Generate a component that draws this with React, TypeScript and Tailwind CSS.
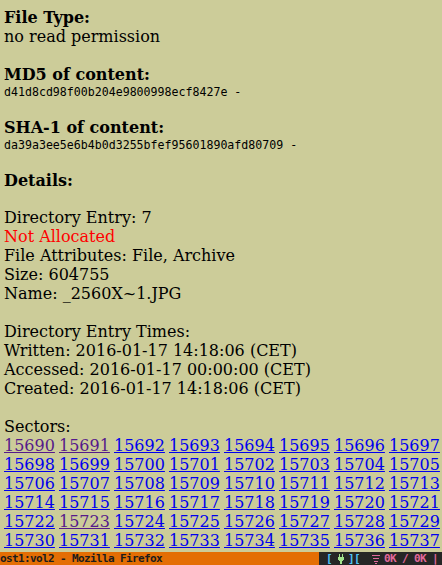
import React from "react";

const serif = { fontFamily: '"DejaVu Serif", serif' };

function Line({ children, h = 19, className = "" }: { children?: React.ReactNode; h?: number; className?: string }) {
  return (
    <div className={`whitespace-nowrap ${className}`} style={{ height: h, lineHeight: `${h}px` }}>
      {children}
    </div>
  );
}

const visited = new Set([15690, 15691, 15723]);

export default function App() {
  const rows: number[][] = [];
  for (let r = 0; r < 8; r++) {
    const row: number[] = [];
    for (let c = 0; c < 8; c++) row.push(15690 + r * 8 + c);
    rows.push(row);
  }
  return (
    <div className="w-[442px] h-[565px] flex flex-col overflow-hidden bg-[#cccc99]">
      <div className="flex-1 overflow-hidden px-1 pt-2 text-[16px] text-black" style={serif}>
        <Line className="font-bold">File Type:</Line>
        <Line>no read permission</Line>
        <Line />
        <Line className="font-bold">MD5 of content:</Line>
        <Line h={17} className="font-['DejaVu_Sans_Mono',monospace] text-[11.6px]">d41d8cd98f00b204e9800998ecf8427e -</Line>
        <Line h={17} />
        <Line className="font-bold">SHA-1 of content:</Line>
        <Line h={17} className="font-['DejaVu_Sans_Mono',monospace] text-[11.6px]">da39a3ee5e6b4b0d3255bfef95601890afd80709 -</Line>
        <Line h={17} />
        <Line className="font-bold">Details:</Line>
        <Line h={18} />
        <Line>Directory Entry: 7</Line>
        <Line className="text-[#ff0000]">Not Allocated</Line>
        <Line>File Attributes: File, Archive</Line>
        <Line>Size: 604755</Line>
        <Line>Name: _2560X~1.JPG</Line>
        <Line />
        <Line>Directory Entry Times:</Line>
        <Line>Written: 2016-01-17 14:18:06 (CET)</Line>
        <Line>Accessed: 2016-01-17 00:00:00 (CET)</Line>
        <Line>Created: 2016-01-17 14:18:06 (CET)</Line>
        <Line />
        <Line>Sectors:</Line>
        {rows.map((row, i) => (
          <div key={i} className="grid grid-cols-[repeat(8,55px)] h-[19px] leading-[19px]">
            {row.map((n) => (
              <a
                key={n}
                href="#"
                className={`underline ${visited.has(n) ? "text-[#551a8b]" : "text-[#0000ee]"}`}
              >
                {n}
              </a>
            ))}
          </div>
        ))}
      </div>
      <div className="h-[13px] flex bg-[#e46e04] font-['DejaVu_Sans_Mono',monospace] font-bold text-[11px] tracking-[-0.62px] leading-[13px]">
        <div className="flex-1 text-[#1c1c1c] whitespace-nowrap overflow-hidden">ost1:vol2 - Mozilla Firefox</div>
        <div className="w-[123px] h-[13px] bg-[#262626] flex items-center whitespace-nowrap pl-[7px]">
          <span className="text-[#4fc3f7]">[</span>
          <svg width="12" height="10" viewBox="0 0 12 10" className="ml-[3px] shrink-0">
            <rect x="4" y="0" width="1" height="3" fill="#a3e38b" />
            <rect x="7" y="0" width="1" height="3" fill="#a3e38b" />
            <rect x="3" y="3" width="6" height="3" fill="#a3e38b" />
            <rect x="4" y="6" width="4" height="1" fill="#a3e38b" />
            <rect x="5" y="7" width="2" height="3" fill="#a3e38b" />
          </svg>
          <span className="text-[#4fc3f7] ml-[1px]">][</span>
          <svg width="10" height="10" viewBox="0 0 10 10" className="ml-[11px] shrink-0">
            <rect x="1" y="1" width="8" height="1" fill="#e0699b" />
            <rect x="2" y="4" width="6" height="1" fill="#e0699b" />
            <rect x="3" y="7" width="4" height="1" fill="#e0699b" />
            <rect x="4" y="9" width="2" height="1" fill="#e0699b" />
          </svg>
          <span className="text-[#e0699b] ml-[3px]">0K / 0K |</span>
        </div>
      </div>
    </div>
  );
}
